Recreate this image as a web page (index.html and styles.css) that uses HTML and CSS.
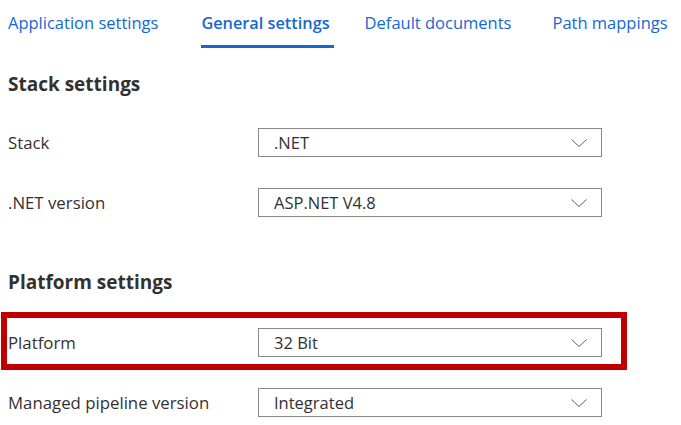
FILE: index.html
```html
<!DOCTYPE html>
<html lang="en">
<head>
<meta charset="utf-8">
<title>General settings</title>
<link rel="stylesheet" href="styles.css">
</head>
<body>
<nav class="tabs">
  <a class="tab tab-app">Application settings</a>
  <a class="tab tab-general active">General settings</a>
  <a class="tab tab-docs">Default documents</a>
  <a class="tab tab-paths">Path mappings</a>
</nav>

<section class="group group-stack">
  <h2 class="group-title">Stack settings</h2>
  <div class="row">
    <label class="row-label">Stack</label>
    <div class="dropdown"><span class="dropdown-value">.NET</span><svg class="chevron" width="16" height="8" viewBox="0 0 16 8"><path d="M0.5 0.5 L8 7.5 L15.5 0.5" fill="none" stroke="#605e5c" stroke-width="1"/></svg></div>
  </div>
  <div class="row">
    <label class="row-label">.NET version</label>
    <div class="dropdown"><span class="dropdown-value">ASP.NET V4.8</span><svg class="chevron" width="16" height="8" viewBox="0 0 16 8"><path d="M0.5 0.5 L8 7.5 L15.5 0.5" fill="none" stroke="#605e5c" stroke-width="1"/></svg></div>
  </div>
</section>

<section class="group group-platform">
  <h2 class="group-title">Platform settings</h2>
  <div class="row row-highlighted">
    <label class="row-label">Platform</label>
    <div class="dropdown"><span class="dropdown-value">32 Bit</span><svg class="chevron" width="16" height="8" viewBox="0 0 16 8"><path d="M0.5 0.5 L8 7.5 L15.5 0.5" fill="none" stroke="#605e5c" stroke-width="1"/></svg></div>
    <div class="highlight"></div>
  </div>
  <div class="row">
    <label class="row-label">Managed pipeline version</label>
    <div class="dropdown"><span class="dropdown-value">Integrated</span><svg class="chevron" width="16" height="8" viewBox="0 0 16 8"><path d="M0.5 0.5 L8 7.5 L15.5 0.5" fill="none" stroke="#605e5c" stroke-width="1"/></svg></div>
  </div>
</section>
</body>
</html>
```

FILE: styles.css
```css
html, body {
  margin: 0;
  padding: 0;
  background: #ffffff;
}

body {
  font-family: "Open Sans", "Noto Sans", sans-serif;
  color: #323130;
  overflow: hidden;
}

.tabs {
  display: flex;
  align-items: flex-start;
  height: 48px;
  padding: 0 0 0 8px;
}

.tab {
  display: block;
  font-size: 16.5px;
  line-height: 22px;
  padding-top: 12px;
  color: #1567d3;
  white-space: nowrap;
  cursor: pointer;
}

.tab-app { margin-right: 43px; }
.tab-general { margin-right: 31px; }
.tab-docs { margin-right: 41px; }

.tab.active {
  font-weight: 600;
  font-size: 16.3px;
  height: 48px;
  box-sizing: border-box;
  border-bottom: 3px solid #1567d3;
  padding-right: 4px;
}

.group {
  padding-left: 8px;
}

.group-title {
  margin: 0;
  font-size: 19px;
  line-height: 24px;
  font-weight: 700;
  color: #323130;
}

.group-stack .group-title {
  padding-top: 24px;
  padding-bottom: 16px;
}

.group-platform .group-title {
  padding-top: 38px;
  padding-bottom: 18px;
}

.row {
  display: flex;
  align-items: center;
  height: 60px;
  position: relative;
}

.row-label {
  width: 250px;
  font-size: 16.8px;
  color: #323130;
  white-space: nowrap;
}

.dropdown {
  width: 344px;
  height: 29px;
  box-sizing: border-box;
  border: 1px solid #8a8886;
  display: flex;
  align-items: center;
  justify-content: space-between;
  padding: 0 14px 0 15px;
}

.dropdown-value {
  font-size: 16.5px;
  color: #323130;
}

.chevron {
  display: block;
  margin-top: 1px;
}

.highlight {
  position: absolute;
  left: -7px;
  top: 0;
  width: 626px;
  height: 58px;
  box-sizing: border-box;
  border: 6px solid #c00000;
  pointer-events: none;
}
```
